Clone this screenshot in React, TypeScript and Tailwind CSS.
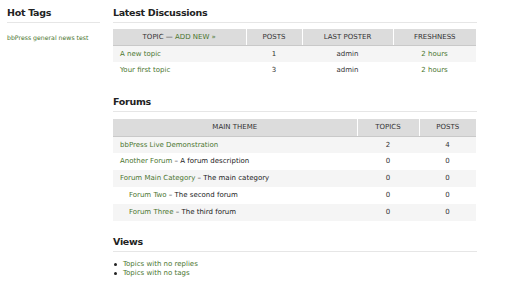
import React from "react";

const font = { fontFamily: '"DejaVu Sans", Verdana, sans-serif' };

function Heading({ children, className = "" }: { children: React.ReactNode; className?: string }) {
  return (
    <h2
      className={`text-[9.5px] leading-[12px] font-bold tracking-[-0.3px] text-[#222] pb-[3px] border-b border-[#e6e6e6] ${className}`}
    >
      {children}
    </h2>
  );
}

const link = "text-[#4b7530]";

const discussions = [
  { title: "A new topic", posts: "1", poster: "admin", fresh: "2 hours" },
  { title: "Your first topic", posts: "3", poster: "admin", fresh: "2 hours" },
];

const forums = [
  { name: "bbPress Live Demonstration", desc: "", indent: false, topics: "2", posts: "4" },
  { name: "Another Forum", desc: "A forum description", indent: false, topics: "0", posts: "0" },
  { name: "Forum Main Category", desc: "The main category", indent: false, topics: "0", posts: "0" },
  { name: "Forum Two", desc: "The second forum", indent: true, topics: "0", posts: "0" },
  { name: "Forum Three", desc: "The third forum", indent: true, topics: "0", posts: "0" },
];

const th = "h-[16px] p-0 bg-[#dcdcdc] border-r border-white last:border-r-0 border-b border-b-[#c9c9c9] text-center font-normal text-[7px] text-[#333] uppercase";

export default function App() {
  return (
    <div className="w-[513px] h-[292px] bg-white flex pl-[7px] gap-[13px] text-[#333]" style={font}>
      <div className="w-[93px] shrink-0">
        <Heading className="pt-[7px]">Hot Tags</Heading>
        <div className={`mt-[11px] text-[6.2px] leading-[8px] ${link}`}>bbPress general news test</div>
      </div>
      <div className="w-[364px] shrink-0">
        <Heading className="pt-[7px]">Latest Discussions</Heading>
        <table className="mt-[6px] w-[363px] table-fixed border-collapse text-[7px]">
          <colgroup>
            <col className="w-[133px]" />
            <col className="w-[56px]" />
            <col className="w-[91px]" />
            <col className="w-[83px]" />
          </colgroup>
          <thead>
            <tr>
              <th className={th}>
                Topic — <span className={link}>Add New »</span>
              </th>
              <th className={th}>Posts</th>
              <th className={th}>Last Poster</th>
              <th className={th}>Freshness</th>
            </tr>
          </thead>
          <tbody>
            {discussions.map((d, i) => (
              <tr key={d.title} className={`h-[17px] ${i % 2 === 0 ? "bg-[#f5f5f5]" : "bg-white"}`}>
                <td className={`p-0 pl-[7px] ${link}`}>{d.title}</td>
                <td className="p-0 text-center">{d.posts}</td>
                <td className="p-0 text-center">{d.poster}</td>
                <td className={`p-0 text-center ${link}`}>{d.fresh}</td>
              </tr>
            ))}
          </tbody>
        </table>

        <Heading className="mt-[17px]">Forums</Heading>
        <table className="mt-[7px] w-[363px] table-fixed border-collapse text-[7px]">
          <colgroup>
            <col className="w-[244px]" />
            <col className="w-[62px]" />
            <col className="w-[57px]" />
          </colgroup>
          <thead>
            <tr>
              <th className={`${th} h-[17px]`}>Main Theme</th>
              <th className={`${th} h-[17px]`}>Topics</th>
              <th className={`${th} h-[17px]`}>Posts</th>
            </tr>
          </thead>
          <tbody>
            {forums.map((f, i) => (
              <tr key={f.name} className={`h-[17px] ${i % 2 === 0 ? "bg-[#f5f5f5]" : "bg-white"}`}>
                <td className={`p-0 ${f.indent ? "pl-[16px]" : "pl-[7px]"}`}>
                  <span className={link}>{f.name}</span>
                  {f.desc && <span className="text-[#222]"> – {f.desc}</span>}
                </td>
                <td className="p-0 text-center">{f.topics}</td>
                <td className="p-0 text-center">{f.posts}</td>
              </tr>
            ))}
          </tbody>
        </table>

        <Heading className="mt-[15px]">Views</Heading>
        <ul className="mt-[8px] text-[7px] leading-[9px]">
          {["Topics with no replies", "Topics with no tags"].map((v) => (
            <li key={v} className="flex items-center">
              <span className="w-[3px] h-[3px] rounded-full bg-[#222] ml-[1px] mr-[6px]" />
              <span className={link}>{v}</span>
            </li>
          ))}
        </ul>
      </div>
    </div>
  );
}
